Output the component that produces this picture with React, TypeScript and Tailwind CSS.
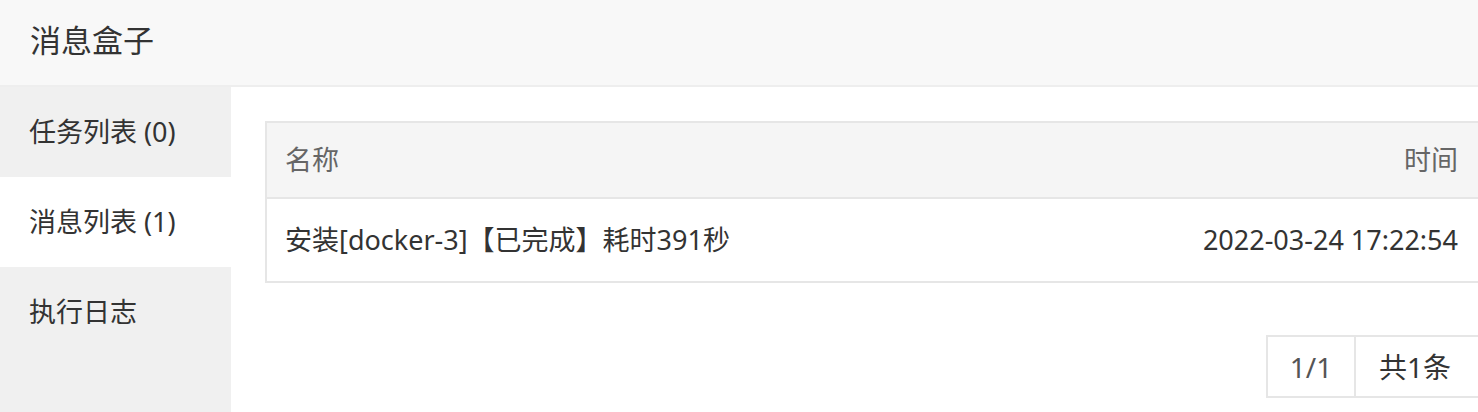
const tabs = [
  { label: "任务列表 (0)", active: false },
  { label: "消息列表 (1)", active: true },
  { label: "执行日志", active: false },
];

const App = () => {
  return (
    <div
      className="w-full h-[412px] overflow-hidden bg-white text-[#333]"
      style={{ fontFamily: '"Noto Sans", "Noto Sans CJK SC", sans-serif' }}
    >
      <div className="w-[1480px] h-full flex flex-col">
        <div className="h-[87px] shrink-0 bg-[#f8f8f8] border-b-2 border-[#eeeeee] flex items-center pl-[30px] pb-[4px]">
          <p className="text-[31px] leading-none text-[#333]">消息盒子</p>
        </div>
        <div className="flex flex-1">
          <div className="w-[231px] shrink-0 bg-[#f0f0f0] flex flex-col">
            {tabs.map((t) => (
              <div
                key={t.label}
                className={
                  t.active
                    ? "h-[90px] flex items-center pl-[29px] bg-white text-[27px]"
                    : "h-[90px] flex items-center pl-[29px] text-[27px]"
                }
              >
                {t.label}
              </div>
            ))}
          </div>
          <div className="flex-1 pl-[34px] pt-[34px]">
            <div className="border-2 border-[#e6e6e6]">
              <div className="h-[76px] bg-[#f5f5f5] flex items-center justify-between px-[18px] text-[27px] text-[#666] border-b-2 border-[#e6e6e6]">
                <span>名称</span>
                <span className="mr-[2px]">时间</span>
              </div>
              <div className="h-[82px] flex items-center justify-between px-[18px] text-[27px] text-[#333]">
                <span>安装[docker-3]【已完成】耗时391秒</span>
                <span className="mr-[2px]">2022-03-24 17:22:54</span>
              </div>
            </div>
            <div className="flex justify-end mt-[52px]">
              <div className="flex h-[63px] border-2 border-[#e6e6e6] border-r-0 text-[28px]">
                <div className="w-[88px] flex items-center justify-center text-[#555] border-r-2 border-[#e6e6e6]">
                  1/1
                </div>
                <div className="w-[124px] flex items-center pl-[23px]">共1条</div>
              </div>
            </div>
          </div>
        </div>
      </div>
    </div>
  );
};

export default App;
